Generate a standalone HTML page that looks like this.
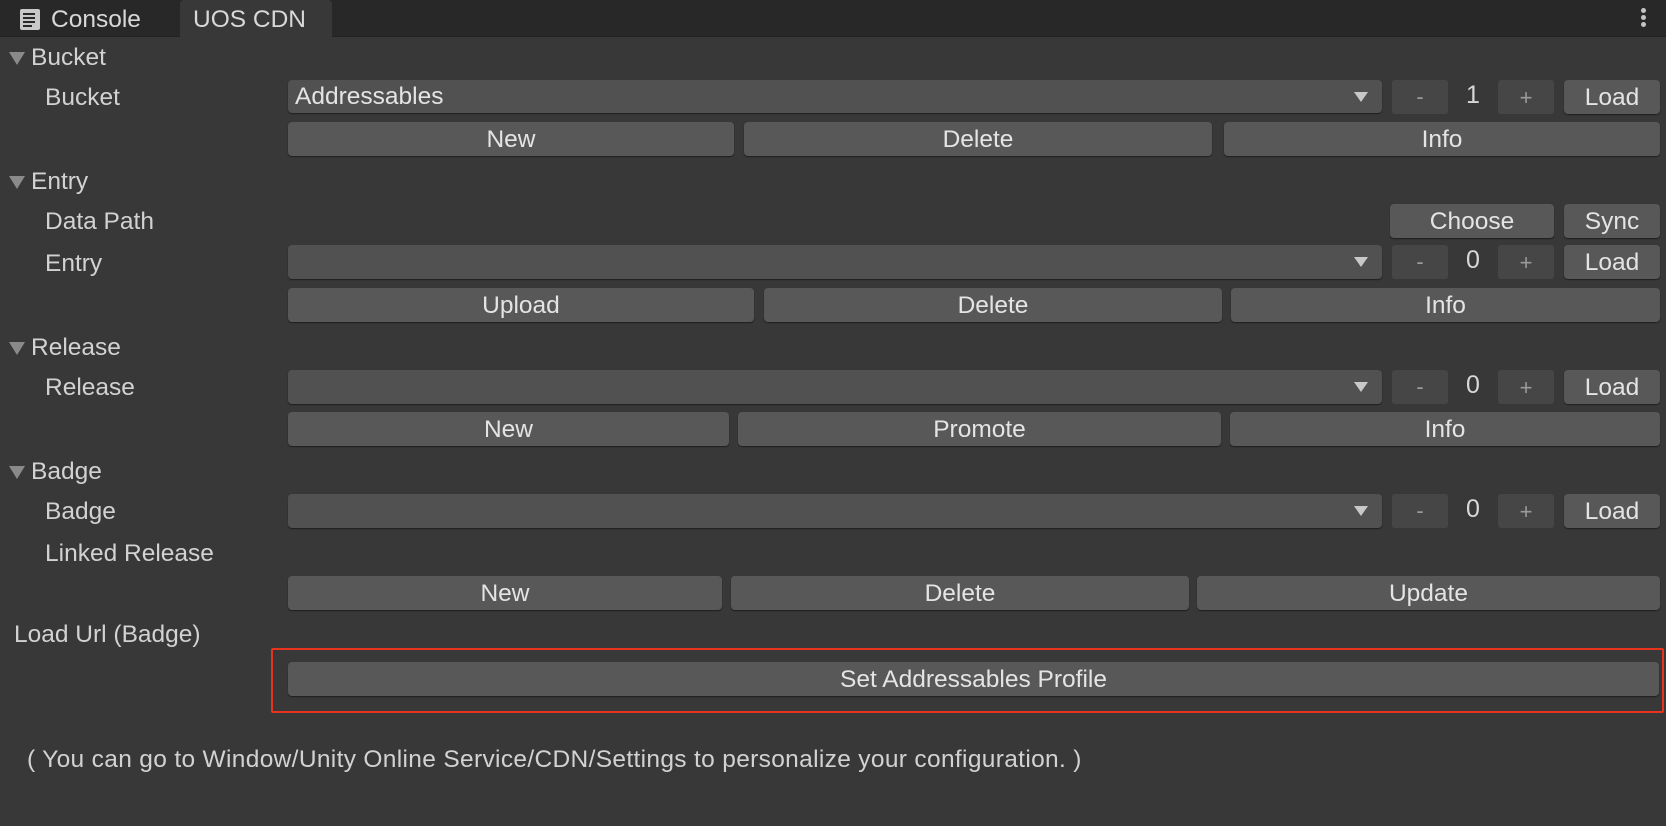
<!DOCTYPE html>
<html><head><meta charset="utf-8">
<style>
*{margin:0;padding:0;box-sizing:border-box}
body{width:1666px;height:826px;background:#383838;font-family:"Liberation Sans","DejaVu Sans",sans-serif;color:#d2d2d2;overflow:hidden;position:relative;font-size:24.5px}
.a{position:absolute}
.tabbar{left:0;top:0;width:1666px;height:37px;background:#282828;border-bottom:1px solid #222}
.tab{top:0;height:38px;line-height:40px;font-size:24.5px;color:#d8d8d8}
.lbl{position:absolute;line-height:28px;white-space:nowrap}
.hdr:before{content:"";position:absolute;left:-22px;top:8px;border-left:8px solid transparent;border-right:8px solid transparent;border-top:13px solid #8a8a8a}
.btn{position:absolute;background:#585858;border-radius:4px;box-shadow:0 1px 1px #1e1e1e;text-align:center;color:#e4e4e4;font-size:24.5px}
.dd{position:absolute;background:#515151;border-radius:4px;box-shadow:0 1px 1px #1e1e1e;color:#e4e4e4;padding-left:7px}
.dd:after{content:"";position:absolute;right:14px;top:12px;border-left:7px solid transparent;border-right:7px solid transparent;border-top:10px solid #c8c8c8}
.pm{position:absolute;background:#464646;border-radius:3px;text-align:center;color:#9a9a9a;font-size:22px}
.num{position:absolute;text-align:center;color:#d8d8d8;font-size:25px}
</style></head><body>
<div class="a tabbar"></div>
<div class="a" style="left:180px;top:0;width:152px;height:38px;background:#383838;border-radius:4px 4px 0 0"></div>
<svg class="a" style="left:20px;top:9px" width="20" height="21" viewBox="0 0 20 21"><rect x="0" y="0" width="20" height="21" rx="2" fill="#c8c8c8"/><g stroke="#282828" stroke-width="2"><line x1="3" y1="5" x2="15" y2="5"/><line x1="3" y1="9" x2="15" y2="9"/><line x1="3" y1="13" x2="15" y2="13"/><line x1="3" y1="17" x2="12" y2="17"/></g></svg>
<div class="a tab" style="left:51px">Console</div>
<div class="a tab" style="left:193px">UOS CDN</div>
<div class="a" style="left:1641px;top:8px;width:5px;height:5px;border-radius:50%;background:#c4c4c4;box-shadow:0 7px 0 #c4c4c4,0 14px 0 #c4c4c4"></div>

<div class="lbl hdr" style="left:31px;top:44px">Bucket</div>
<div class="lbl" style="left:45px;top:84px">Bucket</div>
<div class="dd" style="left:288px;top:80px;width:1094px;height:33px;line-height:33px">Addressables</div>
<div class="pm" style="left:1392px;top:80px;width:56px;height:34px;line-height:34px">-</div>
<div class="num" style="left:1448px;top:80px;width:50px;height:34px;line-height:30px">1</div>
<div class="pm" style="left:1498px;top:80px;width:56px;height:34px;line-height:36px">+</div>
<div class="btn" style="left:1564px;top:80px;width:96px;height:34px;line-height:35px">Load</div>
<div class="btn" style="left:288px;top:122px;width:446px;height:34px;line-height:35px">New</div>
<div class="btn" style="left:744px;top:122px;width:468px;height:34px;line-height:35px">Delete</div>
<div class="btn" style="left:1224px;top:122px;width:436px;height:34px;line-height:35px">Info</div>

<div class="lbl hdr" style="left:31px;top:168px">Entry</div>
<div class="lbl" style="left:45px;top:208px">Data Path</div>
<div class="btn" style="left:1390px;top:204px;width:164px;height:34px;line-height:35px">Choose</div>
<div class="btn" style="left:1564px;top:204px;width:96px;height:34px;line-height:35px">Sync</div>
<div class="lbl" style="left:45px;top:250px">Entry</div>
<div class="dd" style="left:288px;top:245px;width:1094px;height:34px"></div>
<div class="pm" style="left:1392px;top:245px;width:56px;height:34px;line-height:34px">-</div>
<div class="num" style="left:1448px;top:245px;width:50px;height:34px;line-height:30px">0</div>
<div class="pm" style="left:1498px;top:245px;width:56px;height:34px;line-height:36px">+</div>
<div class="btn" style="left:1564px;top:245px;width:96px;height:34px;line-height:35px">Load</div>
<div class="btn" style="left:288px;top:288px;width:466px;height:34px;line-height:35px">Upload</div>
<div class="btn" style="left:764px;top:288px;width:458px;height:34px;line-height:35px">Delete</div>
<div class="btn" style="left:1231px;top:288px;width:429px;height:34px;line-height:35px">Info</div>

<div class="lbl hdr" style="left:31px;top:334px">Release</div>
<div class="lbl" style="left:45px;top:374px">Release</div>
<div class="dd" style="left:288px;top:370px;width:1094px;height:34px"></div>
<div class="pm" style="left:1392px;top:370px;width:56px;height:34px;line-height:34px">-</div>
<div class="num" style="left:1448px;top:370px;width:50px;height:34px;line-height:30px">0</div>
<div class="pm" style="left:1498px;top:370px;width:56px;height:34px;line-height:36px">+</div>
<div class="btn" style="left:1564px;top:370px;width:96px;height:34px;line-height:35px">Load</div>
<div class="btn" style="left:288px;top:412px;width:441px;height:34px;line-height:35px">New</div>
<div class="btn" style="left:738px;top:412px;width:483px;height:34px;line-height:35px">Promote</div>
<div class="btn" style="left:1230px;top:412px;width:430px;height:34px;line-height:35px">Info</div>

<div class="lbl hdr" style="left:31px;top:458px">Badge</div>
<div class="lbl" style="left:45px;top:498px">Badge</div>
<div class="dd" style="left:288px;top:494px;width:1094px;height:34px"></div>
<div class="pm" style="left:1392px;top:494px;width:56px;height:34px;line-height:34px">-</div>
<div class="num" style="left:1448px;top:494px;width:50px;height:34px;line-height:30px">0</div>
<div class="pm" style="left:1498px;top:494px;width:56px;height:34px;line-height:36px">+</div>
<div class="btn" style="left:1564px;top:494px;width:96px;height:34px;line-height:35px">Load</div>
<div class="lbl" style="left:45px;top:540px">Linked Release</div>
<div class="btn" style="left:288px;top:576px;width:434px;height:34px;line-height:35px">New</div>
<div class="btn" style="left:731px;top:576px;width:458px;height:34px;line-height:35px">Delete</div>
<div class="btn" style="left:1197px;top:576px;width:463px;height:34px;line-height:35px">Update</div>

<div class="lbl" style="left:14px;top:621px">Load Url (Badge)</div>
<div class="a" style="left:271px;top:648px;width:1393px;height:65px;border:2px solid #e8341c;border-radius:2px"></div>
<div class="btn" style="left:288px;top:662px;width:1371px;height:34px;line-height:35px">Set Addressables Profile</div>

<div class="lbl" style="left:27px;top:746px;letter-spacing:0.33px">( You can go to Window/Unity Online Service/CDN/Settings to personalize your configuration. )</div>
</body></html>
